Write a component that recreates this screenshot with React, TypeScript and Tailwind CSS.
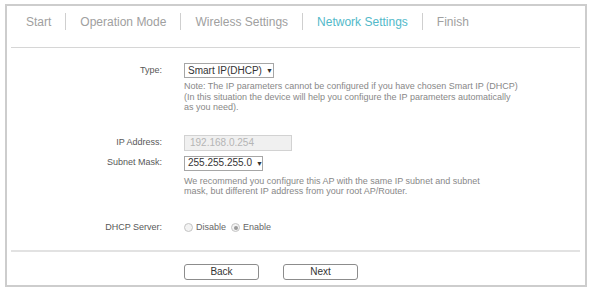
// Quick-Setup Wizard – Schritt "Network Settings"

const TABS = [
  { label: "Start", aktiv: false },
  { label: "Operation Mode", aktiv: false },
  { label: "Wireless Settings", aktiv: false },
  { label: "Network Settings", aktiv: true },
  { label: "Finish", aktiv: false },
];

function Auswahl({ wert, breite }: { wert: string; breite: string }) {
  return (
    <div
      className={`${breite} h-[15px] border border-[#a6a6a6] bg-white flex items-center pl-[3px] text-[10px] leading-none text-[#333]`}
    >
      <span>{wert}</span>
      <span className="ml-[4px] text-[7px] text-[#333]">▼</span>
    </div>
  );
}

function Radio({ checked }: { checked?: boolean }) {
  return (
    <span className="w-[9px] h-[9px] rounded-full border border-[#c4c4c4] bg-[#f3f3f3] flex items-center justify-center">
      {checked && <span className="w-[4px] h-[4px] rounded-full bg-[#9a9a9a]" />}
    </span>
  );
}

export default function App() {
  return (
    <div className="w-[593px] h-[293px] bg-white font-['Liberation_Sans',Arial,sans-serif] pt-[4px] pl-[5px]">
      <div className="w-[582px] h-[283px] border-2 border-[#cdcdcd] flex flex-col">
        {/* Tabs */}
        <div className="flex items-center gap-[14px] pl-[19px] mt-[7px] h-[17px]">
          {TABS.map((tab, i) => (
            <div key={tab.label} className="flex items-center gap-[14px]">
              {i > 0 && <span className="w-px h-[17px] bg-[#cfcfcf]" />}
              <span
                className={`text-[12px] leading-none ${tab.aktiv ? "text-[#52b9c9]" : "text-[#a0a0a0]"}`}
              >
                {tab.label}
              </span>
            </div>
          ))}
        </div>
        <div className="ml-[4px] mr-[5px] mt-[17px] h-px bg-[#d6d6d6]" />

        {/* Formular */}
        <div className="flex flex-col text-[9px] text-[#585858]">
          <div className="flex items-center mt-[15px]">
            <span className="w-[155px] text-right">Type:</span>
            <div className="ml-[22px]">
              <Auswahl wert="Smart IP(DHCP)" breite="w-[90px]" />
            </div>
          </div>
          <p className="ml-[177px] mt-[3px] leading-[10.5px] text-[#888] whitespace-nowrap">
            Note: The IP parameters cannot be configured if you have chosen Smart IP (DHCP)
            <br />
            (In this situation the device will help you configure the IP parameters automatically
            <br />
            as you need).
          </p>

          <div className="flex items-center mt-[22px]">
            <span className="w-[155px] text-right">IP Address:</span>
            <div className="ml-[22px] w-[108px] h-[16px] border border-[#d2d2d2] bg-[#f0f0f0] flex items-center pl-[5px] text-[10px] text-[#b5b5b5]">
              192.168.0.254
            </div>
          </div>
          <div className="flex items-center mt-[5px]">
            <span className="w-[155px] text-right">Subnet Mask:</span>
            <div className="ml-[22px]">
              <Auswahl wert="255.255.255.0" breite="w-[79px]" />
            </div>
          </div>
          <p className="ml-[177px] mt-[5px] leading-[10px] text-[#888] whitespace-nowrap">
            We recommend you configure this AP with the same IP subnet and subnet
            <br />
            mask, but different IP address from your root AP/Router.
          </p>

          <div className="flex items-center mt-[26px] h-[12px]">
            <span className="w-[155px] text-right">DHCP Server:</span>
            <div className="ml-[22px] flex items-center gap-[3px] text-[#666]">
              <Radio />
              <span>Disable</span>
              <span className="ml-[2px]">
                <Radio checked />
              </span>
              <span>Enable</span>
            </div>
          </div>
        </div>

        <div className="ml-[4px] mr-[5px] mt-[16px] h-[2px] bg-[#e2e2e2]" />

        {/* Buttons */}
        <div className="flex gap-[24px] ml-[177px] mt-[12px]">
          <button className="w-[75px] h-[16px] border border-[#8c8c8c] rounded-[3px] bg-white text-[10px] leading-none text-[#333]">
            Back
          </button>
          <button className="w-[75px] h-[16px] border border-[#8c8c8c] rounded-[3px] bg-white text-[10px] leading-none text-[#333]">
            Next
          </button>
        </div>
      </div>
    </div>
  );
}
